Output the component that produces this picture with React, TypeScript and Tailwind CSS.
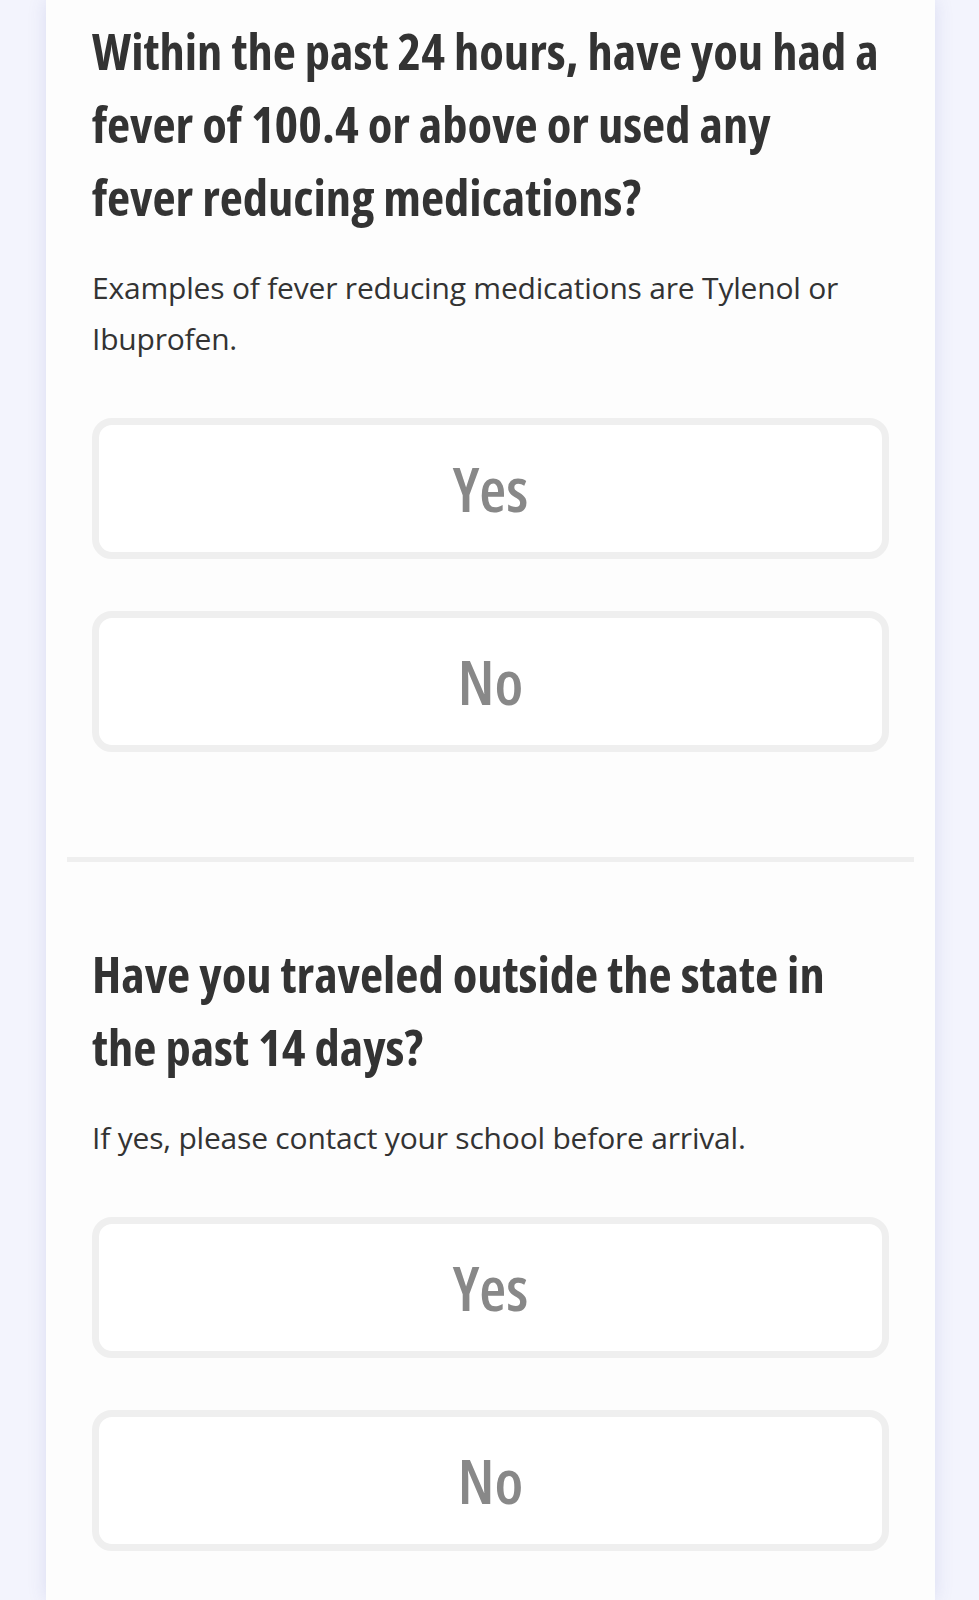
const questions = [
  {
    title: [
      "Within the past 24 hours, have you had a",
      "fever of 100.4 or above or used any",
      "fever reducing medications?",
    ],
    hint: "Examples of fever reducing medications are Tylenol or Ibuprofen.",
  },
  {
    title: ["Have you traveled outside the state in", "the past 14 days?"],
    hint: "If yes, please contact your school before arrival.",
  },
];

function AnswerButton({ label }: { label: string }) {
  return (
    <button className="flex h-[141px] w-full items-center justify-center rounded-[20px] border-[7px] border-[#efefef] bg-white text-[62px] font-semibold font-stretch-75% text-[#888888]">
      {label}
    </button>
  );
}

function Question({ title, hint }: { title: string[]; hint: string }) {
  return (
    <section className="px-[25px]">
      <h2 className="text-[50.5px] leading-[73px] font-bold font-stretch-75% text-[#333333]">
        {title.map((line, i) => (
          <span key={i} className="block">
            {line}
          </span>
        ))}
      </h2>
      <p className="mt-[29px] pr-[40px] text-[30px] leading-[51px] tracking-[-0.2px] text-[#333333]">
        {hint}
      </p>
      <div className="mt-[54px] flex flex-col gap-[52px]">
        <AnswerButton label="Yes" />
        <AnswerButton label="No" />
      </div>
    </section>
  );
}

export default function App() {
  return (
    <div
      className="min-h-screen bg-[#f3f4fd] pl-[46px]"
      style={{ fontFamily: '"Open Sans", "Noto Sans", sans-serif' }}
    >
      <div className="min-h-[1600px] w-[889px] bg-[#fdfdfd] px-[21px] pt-[14px] shadow-[0_0_18px_rgba(70,80,170,0.14)]">
        <Question {...questions[0]} />
        <div className="mt-[105px] mb-[75px] h-[5px] bg-[#efefef]" />
        <Question {...questions[1]} />
      </div>
    </div>
  );
}
